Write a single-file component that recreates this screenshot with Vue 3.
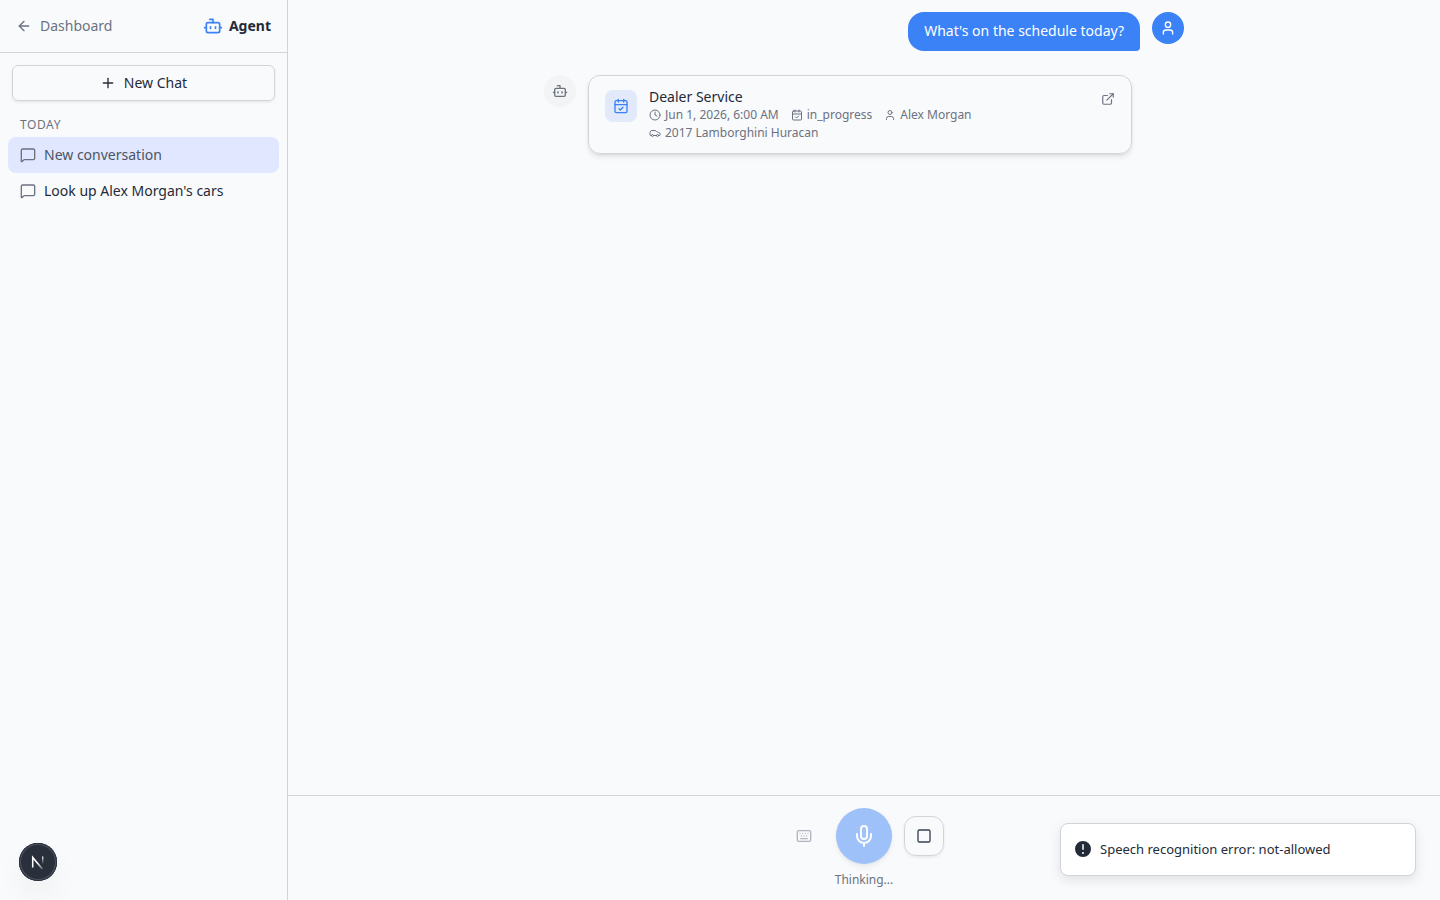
<template>
  <div class="app">
    <aside class="sidebar">
      <header class="sidebar-header">
        <a class="back-link">
          <svg class="icon" width="16" height="16" viewBox="0 0 24 24"><path d="m12 19-7-7 7-7" /><path d="M19 12H5" /></svg>
          Dashboard
        </a>
        <div class="brand">
          <svg class="icon brand-icon" width="20" height="20" viewBox="0 0 24 24">
            <path d="M12 8V4H8" /><rect width="16" height="12" x="4" y="8" rx="2" /><path d="M2 14h2" /><path d="M20 14h2" /><path d="M15 13v2" /><path d="M9 13v2" />
          </svg>
          <span>Agent</span>
        </div>
      </header>

      <button class="new-chat">
        <svg class="icon" width="16" height="16" viewBox="0 0 24 24"><path d="M5 12h14" /><path d="M12 5v14" /></svg>
        New Chat
      </button>

      <nav class="history">
        <div class="history-label">Today</div>
        <div
          v-for="chat in chats"
          :key="chat.id"
          class="history-item"
          :class="{ active: chat.id === activeChat }"
          @click="activeChat = chat.id"
        >
          <svg class="icon" width="16" height="16" viewBox="0 0 24 24"><path d="M22 17a2 2 0 0 1-2 2H6.828a2 2 0 0 0-1.414.586l-2.202 2.202A.71.71 0 0 1 2 21.286V5a2 2 0 0 1 2-2h16a2 2 0 0 1 2 2z" /></svg>
          <span>{{ chat.title }}</span>
        </div>
      </nav>
    </aside>

    <main class="main">
      <div class="messages">
        <div class="message user">
          <div class="bubble">What's on the schedule today?</div>
          <div class="avatar">
            <svg class="icon" width="16" height="16" viewBox="0 0 24 24"><circle cx="12" cy="7" r="4" /><path d="M19 21v-2a4 4 0 0 0-4-4H9a4 4 0 0 0-4 4v2" /></svg>
          </div>
        </div>

        <div class="message">
          <div class="avatar">
            <svg class="icon" width="16" height="16" viewBox="0 0 24 24">
              <path d="M12 8V4H8" /><rect width="16" height="12" x="4" y="8" rx="2" /><path d="M2 14h2" /><path d="M20 14h2" /><path d="M15 13v2" /><path d="M9 13v2" />
            </svg>
          </div>
          <div class="card">
            <div class="card-icon">
              <svg class="icon" width="16" height="16" viewBox="0 0 24 24">
                <path d="M8 2v4" /><path d="M16 2v4" /><rect width="18" height="18" x="3" y="4" rx="2" /><path d="M3 10h18" /><path d="m9 16 2 2 4-4" />
              </svg>
            </div>
            <div class="card-body">
              <div class="card-title">Dealer Service</div>
              <div class="card-meta">
                <span class="meta">
                  <svg class="icon" width="12" height="12" viewBox="0 0 24 24"><circle cx="12" cy="12" r="10" /><path d="M12 6v6l4 2" /></svg>
                  Jun 1, 2026, 6:00 AM
                </span>
                <span class="meta">
                  <svg class="icon" width="12" height="12" viewBox="0 0 24 24">
                    <path d="M8 2v4" /><path d="M16 2v4" /><rect width="18" height="18" x="3" y="4" rx="2" /><path d="M3 10h18" /><path d="m9 16 2 2 4-4" />
                  </svg>
                  in_progress
                </span>
                <span class="meta">
                  <svg class="icon" width="12" height="12" viewBox="0 0 24 24"><circle cx="12" cy="7" r="4" /><path d="M19 21v-2a4 4 0 0 0-4-4H9a4 4 0 0 0-4 4v2" /></svg>
                  Alex Morgan
                </span>
                <span class="meta">
                  <svg class="icon" width="12" height="12" viewBox="0 0 24 24">
                    <path d="M19 17h2c.6 0 1-.4 1-1v-3c0-.9-.7-1.7-1.5-1.9C18.7 10.6 16 10 16 10s-1.3-1.4-2.2-2.3c-.5-.4-1.1-.7-1.8-.7H5c-.6 0-1.1.4-1.4.9l-1.4 2.9A3.7 3.7 0 0 0 2 12v4c0 .6.4 1 1 1h2" />
                    <circle cx="7" cy="17" r="2" /><path d="M9 17h6" /><circle cx="17" cy="17" r="2" />
                  </svg>
                  2017 Lamborghini Huracan
                </span>
              </div>
            </div>
            <svg class="icon card-link" width="14" height="14" viewBox="0 0 24 24">
              <path d="M15 3h6v6" /><path d="M10 14 21 3" /><path d="M18 13v6a2 2 0 0 1-2 2H5a2 2 0 0 1-2-2V8a2 2 0 0 1 2-2h6" />
            </svg>
          </div>
        </div>
      </div>

      <footer class="composer">
        <div class="controls">
          <button class="keyboard">
            <svg class="icon" width="16" height="16" viewBox="0 0 24 24">
              <path d="M10 8h.01" /><path d="M12 12h.01" /><path d="M14 8h.01" /><path d="M16 12h.01" /><path d="M18 8h.01" /><path d="M6 8h.01" /><path d="M7 16h10" /><path d="M8 12h.01" /><rect width="20" height="16" x="2" y="4" rx="2" />
            </svg>
          </button>
          <button class="mic">
            <svg class="icon" width="24" height="24" viewBox="0 0 24 24"><path d="M12 19v3" /><path d="M19 10v2a7 7 0 0 1-14 0v-2" /><rect x="9" y="2" width="6" height="13" rx="3" /></svg>
          </button>
          <button class="stop">
            <svg class="icon" width="16" height="16" viewBox="0 0 24 24"><rect width="18" height="18" x="3" y="3" rx="2" /></svg>
          </button>
        </div>
        <div class="status">Thinking...</div>
      </footer>
    </main>

    <div class="toast">
      <svg width="20" height="20" viewBox="0 0 20 20" fill="currentColor">
        <path fill-rule="evenodd" clip-rule="evenodd" d="M18 10a8 8 0 1 1-16 0 8 8 0 0 1 16 0Zm-8-5a.75.75 0 0 1 .75.75v4.5a.75.75 0 0 1-1.5 0v-4.5A.75.75 0 0 1 10 5Zm0 10a1 1 0 1 0 0-2 1 1 0 0 0 0 2Z" />
      </svg>
      <span>Speech recognition error: not-allowed</span>
    </div>

    <div class="dev-badge">
      <svg width="38" height="38" viewBox="0 0 38 38" fill="none">
        <defs>
          <linearGradient id="diagonal" x1="19" y1="20" x2="24.5" y2="26" gradientUnits="userSpaceOnUse">
            <stop stop-color="#fff" /><stop offset="1" stop-color="#fff" stop-opacity="0.2" />
          </linearGradient>
          <linearGradient id="stem" x1="24" y1="13" x2="24" y2="21" gradientUnits="userSpaceOnUse">
            <stop stop-color="#fff" /><stop offset="1" stop-color="#fff" stop-opacity="0" />
          </linearGradient>
        </defs>
        <path d="M13.7 24.6V14.4L23.4 26" stroke="url(#diagonal)" stroke-width="1.5" />
        <path d="M23.7 13.4v7.6" stroke="url(#stem)" stroke-width="1.4" />
      </svg>
    </div>
  </div>
</template>

<script setup>
import { ref } from 'vue'

const activeChat = ref(1)

const chats = [
  { id: 1, title: 'New conversation' },
  { id: 2, title: "Look up Alex Morgan's cars" }
]
</script>

<style>
body {
  margin: 0;
  background: #f9fafc;
}
</style>

<style scoped>
.app {
  display: flex;
  height: 100vh;
  overflow: hidden;
  background: #f9fafc;
  color: #242b38;
  font-family: "Noto Sans", sans-serif;
  font-size: 14px;
  line-height: 20px;
}

.app * {
  box-sizing: border-box;
}

button {
  padding: 0;
  border: 0;
  background: none;
  color: inherit;
  font: inherit;
}

svg {
  display: block;
  flex-shrink: 0;
}

.icon {
  fill: none;
  stroke: currentColor;
  stroke-width: 2;
  stroke-linecap: round;
  stroke-linejoin: round;
}

/* Sidebar */
.sidebar {
  display: flex;
  flex-direction: column;
  flex-shrink: 0;
  width: 288px;
  border-right: 1px solid #d1d5db;
}

.sidebar-header {
  display: flex;
  align-items: center;
  justify-content: space-between;
  height: 53px;
  padding: 0 16px;
  border-bottom: 1px solid #d1d5db;
}

.back-link {
  display: flex;
  align-items: center;
  gap: 8px;
  color: #6b7280;
}

.brand {
  display: flex;
  align-items: center;
  gap: 6px;
  font-weight: 700;
}

.brand-icon {
  color: #3b82f6;
}

.new-chat {
  display: flex;
  align-items: center;
  justify-content: center;
  gap: 8px;
  height: 36px;
  margin: 12px;
  border: 1px solid #d1d5db;
  border-radius: 6px;
  box-shadow: 0 1px 3px rgba(0, 0, 0, 0.05), 0 2px 4px -1px rgba(0, 0, 0, 0.05);
}

.history {
  padding: 0 8px;
}

.history-label {
  padding: 4px 12px;
  color: #6b7280;
  font-size: 12px;
  line-height: 16px;
  letter-spacing: 0.6px;
  text-transform: uppercase;
}

.history-item {
  display: flex;
  align-items: center;
  gap: 8px;
  height: 36px;
  padding: 0 12px;
  border-radius: 8px;
}

.history-item .icon {
  color: #6b7280;
}

.history-item.active {
  background: #e0e7ff;
  color: #4b5563;
}

/* Conversation */
.main {
  display: flex;
  flex: 1;
  flex-direction: column;
}

.messages {
  display: flex;
  flex: 1;
  flex-direction: column;
  gap: 24px;
  width: 640px;
  margin: 0 auto;
  padding-top: 12px;
}

.message {
  display: flex;
  align-items: flex-start;
  gap: 12px;
}

.message.user {
  justify-content: flex-end;
}

.avatar {
  display: flex;
  align-items: center;
  justify-content: center;
  width: 32px;
  height: 32px;
  border-radius: 50%;
  background: #f3f4f6;
  color: #6b7280;
}

.user .avatar {
  background: #3b82f6;
  color: #fff;
}

.bubble {
  padding: 8px 16px;
  border-radius: 16px 16px 4px 16px;
  background: #3b82f6;
  color: #fff;
  line-height: 22.75px;
}

.card {
  display: flex;
  align-items: flex-start;
  gap: 12px;
  width: 544px;
  padding: 12px 16px;
  border: 1px solid #d1d5db;
  border-radius: 12px;
  box-shadow: 0 1px 3px rgba(0, 0, 0, 0.08), 0 4px 6px -1px rgba(0, 0, 0, 0.08);
}

.card-icon {
  display: flex;
  align-items: center;
  justify-content: center;
  width: 32px;
  height: 32px;
  margin-top: 2px;
  border-radius: 8px;
  background: #e1e9fb;
  color: #3b82f6;
}

.card-body {
  flex: 1;
}

.card-title {
  line-height: 17.5px;
}

.card-meta {
  display: flex;
  flex-wrap: wrap;
  gap: 2px 12px;
  max-width: 424px;
  margin-top: 2px;
  color: #6b7280;
  font-size: 12px;
  line-height: 16px;
}

.meta {
  display: flex;
  align-items: center;
  gap: 4px;
}

.card-link {
  margin-top: 4px;
  color: #6b7280;
}

/* Voice controls */
.composer {
  display: flex;
  flex-direction: column;
  align-items: center;
  gap: 8px;
  padding: 12px;
  border-top: 1px solid #d1d5db;
}

.controls {
  display: flex;
  align-items: center;
  gap: 12px;
}

.controls button {
  display: flex;
  align-items: center;
  justify-content: center;
  width: 40px;
  height: 40px;
}

.controls .keyboard {
  color: #6b7280;
  opacity: 0.5;
}

.controls .mic {
  width: 56px;
  height: 56px;
  border-radius: 50%;
  background: #3b82f6;
  color: #fff;
  opacity: 0.47;
  box-shadow: 0 1px 3px rgba(0, 0, 0, 0.1), 0 4px 6px -1px rgba(0, 0, 0, 0.1);
}

.controls .stop {
  border: 1px solid #d1d5db;
  border-radius: 12px;
  color: #374151;
  box-shadow: 0 1px 3px rgba(0, 0, 0, 0.05), 0 2px 4px -1px rgba(0, 0, 0, 0.05);
}

.status {
  color: #6b7280;
  font-size: 12px;
  line-height: 16px;
}

/* Floating elements */
.toast {
  position: absolute;
  right: 24px;
  bottom: 24px;
  display: flex;
  align-items: center;
  gap: 7px;
  width: 356px;
  height: 53px;
  padding: 0 12px 1px;
  border: 1px solid #d1d5db;
  border-radius: 8px;
  background: #fff;
  box-shadow: 0 4px 12px rgba(0, 0, 0, 0.1);
  font-size: 13px;
}

.dev-badge {
  position: absolute;
  left: 19px;
  bottom: 19px;
  width: 38px;
  height: 38px;
  border-radius: 50%;
  background: #29303b;
  box-shadow: inset 0 0 0 1px #29303b, inset 0 0 0 2px #4b5360, 0 16px 32px -8px rgba(0, 0, 0, 0.12);
}
</style>
